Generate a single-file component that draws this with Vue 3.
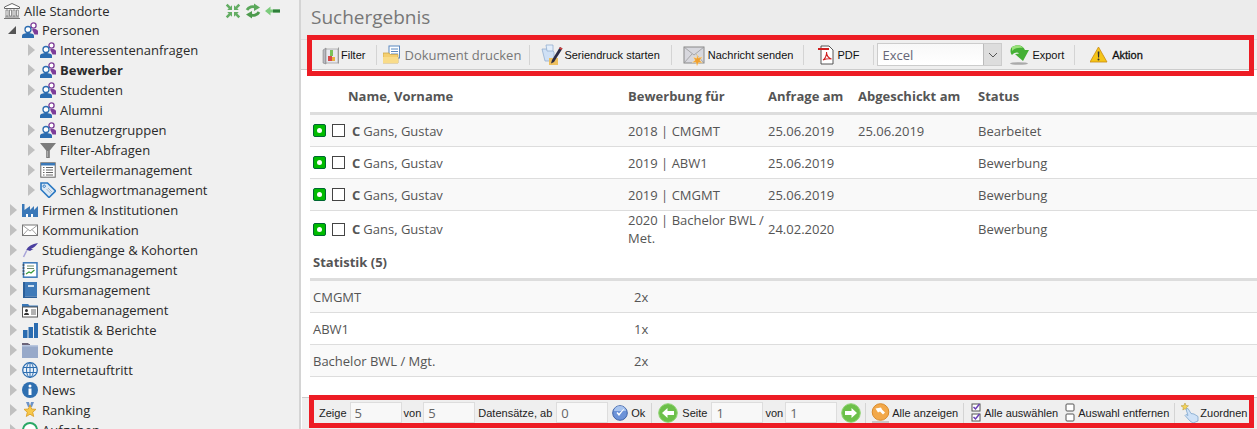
<script setup>
const icons = {
  bank: '<path d="M8 .5 15.500 4v1.500H.5V4z" fill="#fff" stroke="#666"/><path d="M2 7h2v6H2zM5.500 7h2v6h-2zM9 7h2v6H9zM12.500 7h1.800v6h-1.800z" fill="#fff" stroke="#777" stroke-width=".8"/><path d="M1 13.500h14v1H1zM0 15h16v1H0z" fill="#777"/>',
  people: '<circle cx="11.500" cy="3.500" r="2.600" fill="#fff" stroke="#7d3c98" stroke-width="1.300"/><path d="M10 7.500c2-.8 5-.5 6 1.500v3.500h-3.500z" fill="#7d3c98"/><circle cx="6" cy="7.500" r="3" fill="#fff" stroke="#2b6cb0" stroke-width="1.300"/><path d="M0 16v-2.200c0-1.800 3-2.800 6-2.800s6 1 6 2.800V16z" fill="#2b6cb0"/>',
  funnel: '<path d="M0 1h16L9.800 8.500V16H6.200V8.500z" fill="#7b7b7b"/><path d="M7 9h1.200v6H7z" fill="#aaa"/>',
  list: '<rect x=".8" y=".8" width="14.400" height="14.400" fill="#fff" stroke="#666"/><rect x="1" y="1" width="14" height="2.500" fill="#3a78b8"/><path d="M3 5.500h1.500M6 5.500h7M3 8h1.500M6 8h7M3 10.500h1.500M6 10.500h7M3 13h1.500M6 13h7" stroke="#666"/>',
  tag: '<path d="M1 1h6.500L15.500 9 9 15.500 1 7.500z" fill="#dce9f5" stroke="#2b78c2" stroke-width="1.600"/><circle cx="4.200" cy="4.200" r="1.200" fill="#fff" stroke="#2b78c2"/><path d="M6.500 7 11 11.500M8 6l4 4" stroke="#9ab" stroke-width=".8"/>',
  factory: '<path d="M0 15V2h2.500v6L8 4v4l4-4v4l4-4v11z" fill="#3a78b8"/><path d="M4 12h2v3H4zM9 12h2v3H9z" fill="#fff"/>',
  mail: '<rect x=".5" y="3" width="15" height="10.500" fill="#fff" stroke="#777"/><path d="m1 3.500 7 5.500 7-5.500M1 13l5-5.500M15 13l-5-5.500" fill="none" stroke="#888" stroke-width=".8"/>',
  quill: '<path d="M16 1C10 2 6 4 4 8.500 6 8 7 8.500 8 9c1-1 2-1.200 3.500-2-1 0-2 0-2.500-.2C11.500 6 14 4 16 1z" fill="#4a3f9f"/><path d="M4.500 9 1.500 15" stroke="#a8a4d8" stroke-width="1.500"/>',
  exam: '<rect x="1.500" y=".8" width="13.500" height="14.400" fill="#fff" stroke="#3a78b8" stroke-width="1.500"/><path d="M5 4h7M5 6.500h7" stroke="#6a8a6a"/><path d="m4 12 3-2 2 1 3.500-3" fill="none" stroke="#3a9a3a" stroke-width="1.200"/><path d="M.5 3h2M.5 6h2M.5 9h2M.5 12h2" stroke="#333"/>',
  book: '<rect x="1" y="0" width="14" height="14.500" fill="#3f7ab8"/><path d="M1 14.500h14V16H2z" fill="#2b5f99"/><rect x="1" y="0" width="2" height="16" fill="#2b5f99"/><rect x="6" y="3" width="6" height="2" fill="#cfe0f0"/>',
  idfolder: '<path d="M0 2h6l1.500 1.500H16V5H0z" fill="#3a78b8"/><rect x=".5" y="5" width="15" height="10" fill="#fff" stroke="#555"/><circle cx="4.500" cy="8.500" r="1.500" fill="#333"/><path d="M2 13c0-3 5-3 5 0z" fill="#333"/><path d="M9 8h5M9 10h5M9 12h5" stroke="#666"/>',
  bars: '<path d="M1 8h4.500v8H1zM6.500 5H11v11H6.500zM12 1h4v15h-4z" fill="#2b6cb0"/>',
  folder: '<path d="M0 1h6l1 1h1v1H0z" fill="#6b6478"/><path d="M0 3h16v13H0z" fill="#97a9c9"/><path d="M0 3h16v1.500H0z" fill="#b8c6de"/>',
  globe: '<circle cx="8" cy="8" r="7.300" fill="#eaf2fb" stroke="#2f6fb0" stroke-width="1.300"/><ellipse cx="8" cy="8" rx="3.500" ry="7.300" fill="none" stroke="#2f6fb0"/><path d="M8 .5v15M1 5.500h14M1 10.500h14" stroke="#2f6fb0"/>',
  info: '<circle cx="8" cy="8" r="8" fill="#2f6fb0"/><circle cx="8" cy="4" r="1.500" fill="#fff"/><path d="M6.500 6.500h3v6.500h-3z" fill="#fff"/>',
  star: '<path d="M4 0h3l1 4 1-4h3l-2 5H6z" fill="#6d93c7"/><path d="m8 3 1.700 4 4.300.3-3.300 2.900 1 4.300L8 12.200 4.300 14.500l1-4.300L2 7.300 6.300 7z" fill="#f7c84a" stroke="#d89a22" stroke-width=".8"/>',
  clock: '<circle cx="8" cy="8" r="7" fill="#fff" stroke="#2aa866" stroke-width="2"/>',
  shrink: '<g fill="#63ad63"><path d="M7 7H2.200L3.700 5.500 .8 2.600 2.600 .8 5.500 3.700 7 2.200z"/><path d="M9 7h4.800l-1.500-1.500 2.900-2.900-1.800-1.800-2.900 2.900L9 2.200z"/><path d="M7 9H2.200l1.500 1.500-2.900 2.900 1.800 1.800 2.900-2.900L7 13.800z"/><path d="M9 9h4.800l-1.500 1.500 2.900 2.900-1.800 1.800-2.900-2.900L9 13.800z"/></g>',
  sync: '<path d="M2 7c1.500-3 6-4.500 9-2.500" fill="none" stroke="#5aa85a" stroke-width="2.800"/><path d="M9 .5 15 4.500 9 8z" fill="#5aa85a"/><path d="M14 9c-1.500 3-6 4.500-9 2.500" fill="none" stroke="#4d9a4d" stroke-width="2.800"/><path d="M7 15.500 1 11.500 7 8z" fill="#4d9a4d"/>',
  back: '<path d="M0 8 5.500 3.500v3H15v3H5.500v3z" fill="#7ccb7c"/><path d="M8 6.500h7v3H8z" fill="#2f7f3a"/>',
  tfilter: '<path d="M1 5 4 3v16l-3-1z" fill="#b9b9c0" stroke="#777" stroke-width=".5"/><rect x="4" y="4" width="12" height="14" fill="#e8e8ee" stroke="#777" stroke-width=".5"/><rect x="6" y="11" width="4" height="5" fill="#d64a4a"/><rect x="10" y="12" width="3" height="4" fill="#e8b040"/><rect x="8" y="5" width="3" height="6" fill="#7ac25a"/><path d="M16 3l1-1v16l-1 1z" fill="#999"/>',
  tdoc: '<rect x="6" y="1" width="10.500" height="12" fill="#fff" stroke="#5b88c0"/><path d="M8 4h7M8 6.500h7M8 9h7" stroke="#5b88c0"/><path d="M0 8h6l1 1.500h8V18H0z" fill="#f5cf70" stroke="#c9a040" stroke-width=".7"/><path d="M0 12h15v6H0z" fill="#f9dc8a"/>',
  tserial: '<path d="M1 5h9l3 3v9H4z" fill="#cfe0f5" stroke="#8aa8cc" stroke-width=".7"/><path d="M5 1h7v6H6z" fill="#e3eefb" stroke="#8aa8cc" stroke-width=".7"/><path d="M8 14h9v7H8z" fill="#eec060"/><path d="M11 16 19 3l2.500 1.500L13 18l-3 1.500z" fill="#2c2c44"/><path d="M19 3l2.500 1.500-1 1.500-2.500-1.500z" fill="#d04040"/>',
  tmail: '<rect x="1" y="3" width="20" height="16" fill="#d8d8de" stroke="#888"/><path d="m1 3 10 8 10-8M1 19l8-9M21 19l-8-9" fill="none" stroke="#999" stroke-width=".8"/><path d="m14 10 1.400 4 4-1.200-2.500 3.400 2.500 2.800-3.700-.6-1.700 3.600-1.200-3.700-3.800.2 3.100-2.300-2-3.200 3.500 1.200z" fill="#f0a030" stroke="#fff0c0" stroke-width=".4"/>',
  tpdf: '<path d="M3 1h8l4 4v14H3z" fill="#fff" stroke="#444" stroke-width=".9"/><path d="M0 3h11v2H0z" fill="#d02020"/><path d="M5 15c2-1 4-5 3.500-8 0 3 2 6 5 7-3-.5-6 0-8.500 1z" fill="none" stroke="#d02020" stroke-width="1.100"/>',
  texport: '<path d="M3 3c5-3 11-2 13 3l4 0-6 11-8-7 4-.5C9 8 6 8 3 11 1 9 1 5 3 3z" fill="#45b035"/><path d="M3 3c5-3 9-2 11 1-4-1-8 0-11 3z" fill="#9ae27a"/><ellipse cx="10" cy="19.500" rx="9" ry="1.300" fill="#aaa"/>',
  twarn: '<path d="M8.500 1 17 16H0z" fill="#f5c518" stroke="#c98a10" stroke-width=".8"/><path d="M7.700 5.500h1.700l-.3 6H8z" fill="#333"/><circle cx="8.500" cy="13.500" r="1" fill="#333"/>',
  tok: '<circle cx="8" cy="8" r="7.300" fill="#6d93d8" stroke="#4064a8"/><path d="M2 6a6 5 0 0 1 12 0z" fill="#a8c4ef"/><path d="m4.500 8 2.500 3 5-6.500-.5-.5L7 8.500 5.500 7z" fill="#fff"/>',
  tleft: '<circle cx="10" cy="10" r="9.300" fill="#6cc04a" stroke="#92d474"/><path d="M4 10l5.500-5v3H16v4H9.500v3z" fill="#fff"/>',
  tright: '<circle cx="10" cy="10" r="9.300" fill="#6cc04a" stroke="#92d474"/><path d="M16 10l-5.500-5v3H4v4h6.500v3z" fill="#fff"/>',
  tall: '<circle cx="9.500" cy="9" r="8.300" fill="#f2a84a" stroke="#d98a2a"/><path d="M4.500 5.500 10 4.500l1 2 3 3-2 2-3-3-2 1z" fill="#fff"/><path d="M1 19h17" stroke="#bbb" stroke-width="1.500"/>',
  tchecks: '<rect x="1" y="1" width="8" height="7" fill="#fff" stroke="#555"/><path d="m2.500 4 2 2 4-5" fill="none" stroke="#6a3fb5" stroke-width="1.500"/><rect x="1" y="11" width="8" height="7" fill="#fff" stroke="#555"/><path d="m2.500 14 2 2 4-5" fill="none" stroke="#6a3fb5" stroke-width="1.500"/>',
  tboxes: '<rect x="1" y="1" width="8" height="7" rx="1" fill="#fff" stroke="#555"/><rect x="1" y="11" width="8" height="7" rx="1" fill="#fff" stroke="#555"/>',
  thand: '<path d="M4 0l1 2.500 2.500.3-2 1.700.5 2.500-2-1.300-2.200 1.300.5-2.500L0 2.800 2.800 2.500z" fill="#f2d35a" stroke="#b09030" stroke-width=".5"/><path d="M5 6l2-.5 3 5 3 .5 4 2.500V18l-5 2-3-2-5-5.500 1-1 2 1z" fill="#cfe2f7" stroke="#7ea4cc" stroke-width=".8"/>'
}

const tree = [
  { label: 'Interessentenanfragen', icon: 'people', lvl: 2, arrow: true },
  { label: 'Bewerber', icon: 'people', lvl: 2, arrow: true, bold: true },
  { label: 'Studenten', icon: 'people', lvl: 2, arrow: true },
  { label: 'Alumni', icon: 'people', lvl: 2, arrow: false },
  { label: 'Benutzergruppen', icon: 'people', lvl: 2, arrow: true },
  { label: 'Filter-Abfragen', icon: 'funnel', lvl: 2, arrow: true },
  { label: 'Verteilermanagement', icon: 'list', lvl: 2, arrow: true },
  { label: 'Schlagwortmanagement', icon: 'tag', lvl: 2, arrow: true },
  { label: 'Firmen & Institutionen', icon: 'factory', lvl: 1, arrow: true },
  { label: 'Kommunikation', icon: 'mail', lvl: 1, arrow: true },
  { label: 'Studiengänge & Kohorten', icon: 'quill', lvl: 1, arrow: true },
  { label: 'Prüfungsmanagement', icon: 'exam', lvl: 1, arrow: true },
  { label: 'Kursmanagement', icon: 'book', lvl: 1, arrow: true },
  { label: 'Abgabemanagement', icon: 'idfolder', lvl: 1, arrow: true },
  { label: 'Statistik & Berichte', icon: 'bars', lvl: 1, arrow: true },
  { label: 'Dokumente', icon: 'folder', lvl: 1, arrow: true },
  { label: 'Internetauftritt', icon: 'globe', lvl: 1, arrow: true },
  { label: 'News', icon: 'info', lvl: 1, arrow: true },
  { label: 'Ranking', icon: 'star', lvl: 1, arrow: true },
  { label: 'Aufgaben', icon: 'clock', lvl: 1, arrow: true }
]

const results = [
  { program: '2018 | CMGMT', asked: '25.06.2019', sent: '25.06.2019', status: 'Bearbeitet' },
  { program: '2019 | ABW1', asked: '25.06.2019', sent: '', status: 'Bewerbung' },
  { program: '2019 | CMGMT', asked: '25.06.2019', sent: '', status: 'Bewerbung' },
  { program: '2020 | Bachelor BWL / Met.', asked: '24.02.2020', sent: '', status: 'Bewerbung' }
]

const stats = [
  { name: 'CMGMT', count: '2x' },
  { name: 'ABW1', count: '1x' },
  { name: 'Bachelor BWL / Mgt.', count: '2x' }
]
</script>

<template>
  <div class="app">
    <aside class="side">
      <div class="row root">
        <svg class="ic" viewBox="0 0 16 16" v-html="icons.bank"></svg>
        <span>Alle Standorte</span>
        <div class="tools">
          <svg class="ic" viewBox="0 0 16 16" v-html="icons.shrink"></svg>
          <svg class="ic" viewBox="0 0 16 16" v-html="icons.sync"></svg>
          <svg class="ic" viewBox="0 0 16 16" v-html="icons.back"></svg>
        </div>
      </div>
      <div class="row open">
        <i class="arrow-open"></i>
        <svg class="ic" viewBox="0 0 16 16" v-html="icons.people"></svg>
        <span>Personen</span>
      </div>
      <div v-for="n in tree" :key="n.label" class="row" :class="['lvl' + n.lvl, { bold: n.bold }]">
        <i class="slot"><b v-if="n.arrow" class="arrow"></b></i>
        <svg class="ic" viewBox="0 0 16 16" v-html="icons[n.icon]"></svg>
        <span>{{ n.label }}</span>
      </div>
    </aside>

    <main class="main">
      <header class="head"><h1>Suchergebnis</h1></header>

      <div class="toolbar">
        <div class="frame frame-top"></div>
        <a class="btn"><svg class="i-filter" viewBox="0 0 18 20" v-html="icons.tfilter"></svg>Filter</a>
        <i class="sep sep-a"></i>
        <a class="btn btn-doc"><svg class="ic20" viewBox="0 0 20 20" v-html="icons.tdoc"></svg>Dokument drucken</a>
        <i class="sep sep-b"></i>
        <a class="btn"><svg class="ic22" viewBox="0 0 22 22" v-html="icons.tserial"></svg>Seriendruck starten</a>
        <i class="sep sep-e"></i>
        <a class="btn btn-mail"><svg class="ic22" viewBox="0 0 22 22" v-html="icons.tmail"></svg>Nachricht senden</a>
        <i class="sep sep-c"></i>
        <a class="btn"><svg class="i-filter" viewBox="0 0 18 20" v-html="icons.tpdf"></svg>PDF</a>
        <i class="sep sep-d"></i>
        <div class="select"><span>Excel</span><b class="chev"><svg width="10" height="6" viewBox="0 0 10 6"><path d="m1 1 4 4 4-4" fill="none" stroke="#555"/></svg></b></div>
        <a class="btn btn-export"><svg class="ic22" viewBox="0 0 22 22" v-html="icons.texport"></svg>Export</a>
        <i class="sep sep-c"></i>
        <a class="btn btn-strong"><svg class="ic18" viewBox="0 0 18 18" v-html="icons.twarn"></svg>Aktion</a>
      </div>

      <section class="content">
        <table class="grid">
          <colgroup><col class="c1" /><col class="c2" /><col class="c3" /><col class="c4" /><col /></colgroup>
          <thead>
            <tr>
              <th class="th-name">Name, Vorname</th>
              <th>Bewerbung für</th>
              <th>Anfrage am</th>
              <th>Abgeschickt am</th>
              <th>Status</th>
            </tr>
          </thead>
          <tbody>
            <tr v-for="(r, i) in results" :key="i">
              <td>
                <div class="who">
                  <i class="led"></i><i class="check"></i><b>C</b><span>Gans, Gustav</span>
                </div>
              </td>
              <td>{{ r.program }}</td>
              <td>{{ r.asked }}</td>
              <td>{{ r.sent }}</td>
              <td>{{ r.status }}</td>
            </tr>
          </tbody>
        </table>

        <h2 class="stat-title">Statistik (5)</h2>
        <div class="stat-list">
          <div v-for="s in stats" :key="s.name" class="stat-row">
            <span class="stat-name">{{ s.name }}</span><span>{{ s.count }}</span>
          </div>
        </div>
      </section>

      <footer class="pager">
        <div class="frame frame-bottom"></div>
        <span class="lbl">Zeige</span><input class="num num-first" value="5" />
        <span class="lbl">von</span><input class="num" value="5" />
        <span class="lbl lbl-from">Datensätze, ab</span><input class="num num-wide" value="0" />
        <a class="pbtn pbtn-ok"><svg class="ic16" viewBox="0 0 16 16" v-html="icons.tok"></svg>Ok</a>
        <i class="psep"></i>
        <a class="pbtn"><svg class="ic20 gap4" viewBox="0 0 20 20" v-html="icons.tleft"></svg>Seite</a>
        <input class="num num-wide" value="1" />
        <span class="lbl">von</span><input class="num" value="1" />
        <a class="pbtn pbtn-next"><svg class="ic20" viewBox="0 0 20 20" v-html="icons.tright"></svg></a>
        <i class="psep psep-tight"></i>
        <a class="pbtn pbtn-all"><svg class="ic20" viewBox="0 0 20 20" v-html="icons.tall"></svg>Alle anzeigen</a>
        <i class="psep psep-wide"></i>
        <a class="pbtn"><svg class="ic-tall" viewBox="0 0 10 20" v-html="icons.tchecks"></svg>Alle auswählen</a>
        <a class="pbtn pbtn-boxes"><svg class="ic-tall" viewBox="0 0 10 20" v-html="icons.tboxes"></svg>Auswahl entfernen</a>
        <i class="psep psep-last"></i>
        <a class="pbtn pbtn-hand"><svg class="i-hand" viewBox="0 0 18 20" v-html="icons.thand"></svg>Zuordnen</a>
      </footer>
    </main>
  </div>
</template>

<style>
html, body { margin: 0; background: #fff; overflow: hidden; }
</style>

<style scoped>
.app { display: flex; width: 1257px; height: 429px; overflow: hidden; font-family: "Open Sans", sans-serif; font-size: 13px; }

.side { flex: 0 0 299px; height: 429px; overflow: hidden; background: #f0f0f0; padding-top: 1px; box-sizing: border-box; color: #2a2a2a; }
.row { display: flex; align-items: center; height: 20px; white-space: nowrap; }
.root { height: 19px; padding-left: 4px; }
.ic { flex: none; width: 16px; height: 16px; margin-right: 4px; }
.tools { display: flex; margin-left: auto; margin-right: 14px; }
.tools .ic { margin-right: 4px; }
.open { padding-left: 8px; }
.arrow-open { flex: none; width: 0; height: 0; margin-right: 6px; border-style: solid; border-width: 0 0 8px 8px; border-color: transparent transparent #555 transparent; }
.lvl1 { padding-left: 10px; }
.lvl2 { padding-left: 28px; }
.slot { flex: none; width: 12px; display: flex; align-items: center; }
.arrow { display: block; width: 0; height: 0; border-style: solid; border-width: 6px 0 6px 7px; border-color: transparent transparent transparent #c0c0c0; }
.bold { font-weight: 700; }

.main { flex: 1; min-width: 0; display: flex; flex-direction: column; height: 429px; background: #fff; border-left: 2px solid #d4d4d4; }
.head { height: 39px; flex: none; background: #ececec; padding-left: 10px; box-sizing: border-box; }
h1 { margin: 0; font-size: 19px; font-weight: 400; line-height: 35px; color: #777; }

.toolbar { position: relative; flex: none; height: 31px; box-sizing: border-box; display: flex; align-items: center; padding-left: 21px; background: #efefef; border-top: 1px solid #ddd; border-bottom: 1px solid #ccc; font-family: "Liberation Sans", Arial, sans-serif; font-size: 11px; color: #111; }
.frame { position: absolute; box-sizing: border-box; border: 5px solid #ed1c24; pointer-events: none; }
.frame-top { left: 6px; right: 3px; top: -5px; bottom: -7px; }
.frame-bottom { left: 7px; right: 3px; top: -3px; bottom: 1px; }
.btn { display: flex; align-items: center; white-space: nowrap; }
.btn svg { flex: none; margin-right: 1px; }
.i-filter { width: 18px; height: 20px; }
.i-hand { width: 18px; height: 20px; }
.ic16 { width: 16px; height: 16px; }
.ic18 { width: 18px; height: 18px; }
.ic20 { width: 20px; height: 20px; }
.ic22 { width: 22px; height: 22px; }
.ic-tall { width: 10px; height: 20px; }
.btn-doc { font-family: "Open Sans", sans-serif; font-size: 13px; color: #777; }
.btn-mail svg { margin-right: 3px; }
.btn-export { margin-left: 7px; }
.btn-strong { margin-left: 1px; -webkit-text-stroke: .3px #111; }
.btn-strong svg { margin-right: 4px; }
.sep { flex: none; width: 1px; height: 20px; background: #d4d4d4; }
.sep-a { margin: 0 6px 0 11px; }
.sep-b { margin: 0 11px 0 8px; }
.sep-c { margin: 0 14px 0 10px; }
.sep-d { margin: 0 3px 0 14px; }
.sep-e { margin: 0 11px; }
.select { width: 125px; height: 23px; box-sizing: border-box; display: flex; align-items: stretch; border: 1px solid #ccc; background: linear-gradient(#f8f8f8, #fff); font-family: "Open Sans", sans-serif; font-size: 13px; color: #667; }
.select span { flex: 1; line-height: 23px; padding-left: 4px; }
.chev { flex: none; width: 17px; display: flex; align-items: center; justify-content: center; background: #ddd; border-left: 1px solid #bbb; }

.content { flex: 1; min-height: 0; padding-left: 9px; color: #555; line-height: 18px; }
.grid { width: 100%; table-layout: fixed; border-collapse: separate; border-spacing: 0; }
.c1 { width: 315px; }
.c2 { width: 140px; }
.c3 { width: 90px; }
.c4 { width: 120px; }
th { height: 45px; padding: 10px 0 0 3px; box-sizing: border-box; text-align: left; font-weight: 700; color: #555; border-bottom: 3px solid #ddd; }
.th-name { padding-left: 38px; }
td { height: 32px; padding: 0 0 0 3px; box-sizing: border-box; border-bottom: 1px solid #ddd; vertical-align: middle; }
tbody tr:nth-child(odd) td { background: #f9f9f9; }
tbody tr:last-child td { height: 36px; border-bottom: 0; background: #fff; }
.who { display: flex; align-items: center; }
.who b { margin-right: 3px; }
.led { flex: none; position: relative; width: 13px; height: 13px; box-sizing: border-box; margin-right: 6px; border: 1px solid #063; border-radius: 2px; background: #0b0; }
.led::after { content: ""; position: absolute; left: 3px; top: 3px; width: 5px; height: 5px; border-radius: 50%; background: #fff; }
.check { flex: none; width: 13px; height: 13px; box-sizing: border-box; margin-right: 7px; border: 1px solid #444; background: #fff; }

.stat-title { margin: 0; height: 34px; padding: 6px 0 0 3px; box-sizing: border-box; font-size: 13px; font-weight: 700; line-height: 18px; border-bottom: 3px solid #ddd; }
.stat-row { display: flex; align-items: center; height: 32px; box-sizing: border-box; padding-left: 3px; border-bottom: 1px solid #ddd; }
.stat-row:nth-child(odd) { background: #f9f9f9; }
.stat-name { width: 321px; }

.pager { position: relative; flex: none; height: 32px; box-sizing: border-box; display: flex; align-items: center; margin-left: 1px; padding: 0 0 2px 17px; background: #efefef; border-top: 1px solid #ccc; font-family: "Liberation Sans", Arial, sans-serif; font-size: 11px; color: #222; }
.lbl { white-space: nowrap; }
.lbl-from { margin-left: 1px; }
.num { flex: none; width: 52px; height: 21px; box-sizing: border-box; margin: 0 2px; padding: 0 4px; border: 1px solid #ddd; background: #f8f8f8; font-family: "Open Sans", sans-serif; font-size: 13px; color: #666; }
.num-first { margin-left: 3px; }
.num-wide { margin-left: 4px; }
.pbtn { display: flex; align-items: center; white-space: nowrap; }
.pbtn svg { flex: none; margin-right: 3px; }
.pbtn .gap4 { margin-right: 4px; }
.pbtn-ok { margin-left: 2px; }
.pbtn-next { margin-left: 2px; }
.pbtn-boxes { margin-left: 7px; }
.pbtn-all svg { margin-right: 1px; }
.pbtn-hand svg { margin-right: 1px; }
.psep { flex: none; width: 1px; height: 20px; margin: 0 6px; background: #d4d4d4; }
.psep-tight { margin: 0 5px 0 1px; }
.psep-wide { margin: 0 7px 0 5px; }
.psep-last { margin: 0 6px 0 5px; }
</style>
